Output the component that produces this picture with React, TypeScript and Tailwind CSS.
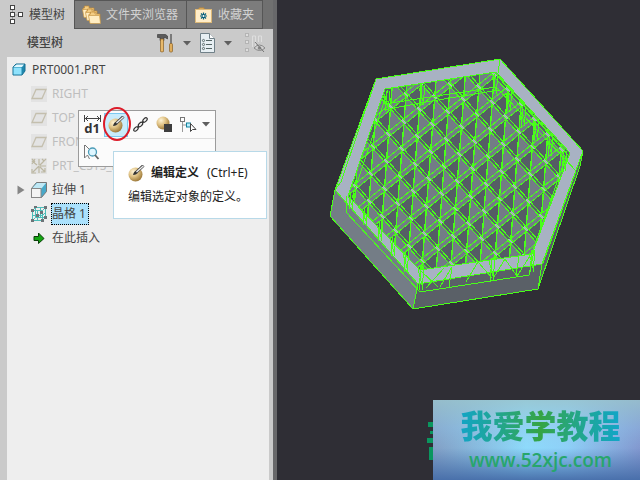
import type { ReactNode } from "react";

const GREEN = "#48ff18";

function TreeTabIcon() {
  return (
    <svg width="15" height="20" viewBox="0 0 15 20" className="shrink-0">
      <path d="M4.500 3v14M4.500 10h6" stroke="#999" fill="none" />
      <g fill="#fff" stroke="#444">
        <rect x="2.500" y="0.500" width="4" height="4" />
        <rect x="2.500" y="7.500" width="4" height="4" />
        <rect x="10.500" y="7.500" width="4" height="4" />
        <rect x="2.500" y="14.500" width="4" height="4" />
      </g>
    </svg>
  );
}

function FoldersIcon() {
  return (
    <svg width="20" height="20" viewBox="0 0 20 20" className="shrink-0">
      {[0, 3, 6].map((n) => (
        <g key={n} transform={`translate(${n} ${n})`}>
          <path d="M1 3h1.500V1H7v2h5v8H2z" fill="#f3cd83" stroke="#c08a36" strokeWidth="0.700" />
          <path d="M0.500 4.500h11l1 8H2z" fill="#ffedc2" stroke="#c99a4b" strokeWidth="0.700" />
        </g>
      ))}
    </svg>
  );
}

function FavoritesIcon() {
  return (
    <svg width="18" height="18" viewBox="0 0 18 18" className="shrink-0">
      <path d="M4 4V2h5v2" fill="#e9bd72" stroke="#c08a36" />
      <rect x="0.500" y="3.500" width="16" height="13" fill="#ffedc9" stroke="#dcb878" />
      <path d="M8.500 6.500v7M5 10h7M6 7.500l5 5M11 7.500l-5 5" stroke="#08607c" strokeWidth="1.200" />
      <circle cx="8.500" cy="10" r="1" fill="#fff" />
    </svg>
  );
}

function ToolsIcon() {
  return (
    <svg width="18" height="20" viewBox="0 0 18 20">
      <path d="M0.500 1.500h8l2 1.500v3L8 4.500H7v3H3V4.500H0.500z" fill="#5b5b5b" stroke="#333" strokeWidth="0.600" />
      <path d="M3.500 6h3v12.500q-1.500 1-3 0z" fill="#e8b96b" stroke="#8a6025" strokeWidth="0.700" />
      <path d="M14 1v10" stroke="#666" strokeWidth="1.600" />
      <rect x="12.500" y="10.500" width="3" height="8.500" rx="1" fill="#e0ad5b" stroke="#8a6025" strokeWidth="0.700" />
    </svg>
  );
}

function ListIcon() {
  return (
    <svg width="17" height="20" viewBox="0 0 17 20">
      <path d="M1.500 0.500h9l5 5v14h-14z" fill="#e7eff3" stroke="#708088" />
      <path d="M10.500 0.500v5h5" fill="#fff" stroke="#708088" />
      <path d="M7 7.500h6M7 11.500h6M7 15.500h6" stroke="#566" />
      <g fill="none" stroke="#455" strokeWidth="0.800">
        <circle cx="4.500" cy="7.500" r="1.100" />
        <circle cx="4.500" cy="11.500" r="1.100" />
        <circle cx="4.500" cy="15.500" r="1.100" />
      </g>
    </svg>
  );
}

function HiddenColumnsIcon() {
  return (
    <svg width="22" height="20" viewBox="0 0 22 20">
      <g fill="#dedede" stroke="#b4b4b4">
        <rect x="1.500" y="0.500" width="3" height="3" />
        <rect x="1.500" y="7.500" width="3" height="3" />
        <rect x="1.500" y="15.500" width="3" height="3" />
        <path d="M8.500 14V3h3v10M14.500 9V3h3v6" fill="none" stroke="#dedede" />
      </g>
      <path d="M10 15q5.500-6 11 0-5.500 5-11 0z" fill="#d2d2d2" stroke="#888" />
      <circle cx="15.500" cy="15" r="1.800" fill="#888" />
      <path d="M11 9l9 10" stroke="#777" />
    </svg>
  );
}

function Caret() {
  return (
    <svg width="8" height="5" viewBox="0 0 8 5">
      <path d="M0 0h8L4 4.500z" fill="#5f5f5f" />
    </svg>
  );
}

function PartIcon() {
  return (
    <svg width="14" height="13" viewBox="0 0 14 13">
      <path d="M1 4l3-3h9v7l-3 4H1z" fill="#1f87ad" stroke="#176f92" />
      <path d="M1.500 4l3-2.500H12L10 4z" fill="#e1f8ff" />
      <path d="M1.500 4.500h8V11.500h-8z" fill="#8fe2fc" />
    </svg>
  );
}

function PlaneIcon() {
  return (
    <svg width="16" height="16" viewBox="0 0 16 16">
      <rect width="16" height="16" fill="#e3e3e3" />
      <path d="M5 3.500h10l-4 9H1z" fill="none" stroke="#c4bfae" strokeWidth="1.300" />
    </svg>
  );
}

function CsysIcon() {
  return (
    <svg width="16" height="16" viewBox="0 0 16 16">
      <rect width="16" height="16" fill="#e3e3e3" />
      <path d="M1 3l5 4M1 1l3 3M4 1L1 6M8 7V1M8 8h7M8 8l-6 6M8 9v6M9 9l5 5M14 10v4h-4M9 7l4-4M11 1l2 2 2-2M1 11v4h4" fill="none" stroke="#bcb7a2" strokeWidth="1.200" />
    </svg>
  );
}

function ExtrudeIcon() {
  return (
    <svg width="16" height="16" viewBox="0 0 16 16">
      <path d="M0.500 6.500l5-6h10v9l-5 6z" fill="#48a9c9" stroke="#777" />
      <path d="M1 6.500l5-5.500h9l-4.500 5.500z" fill="#bfe8f5" />
      <rect x="0.500" y="6.500" width="9.500" height="9" fill="#f4f4f4" stroke="#888" />
    </svg>
  );
}

function LatticeIcon() {
  return (
    <svg width="16" height="16" viewBox="0 0 16 16">
      <path d="M1.500 4.500h10v10h-10zM4.500 1.500h10v10h-10zM1.500 4.500l3-3M11.500 4.500l3-3M11.500 14.500l3-3M1.500 14.500l3-3M6.500 4.500v10M9.500 1.500v10M1.500 9.500h10l3-3" fill="none" stroke="#4dbdb9" />
      <path d="M0 3h3v3H0zM13 0h3v3h-3zM3 0h3v2H3zM0 13h3v3H0zM10 13h3v3h-3zM5 8h3v3H5zM9 5h3v3H9zM13 10h3v3h-3z" fill="#6c7478" />
    </svg>
  );
}

function InsertIcon() {
  return (
    <svg width="12" height="12" viewBox="0 0 12 12">
      <path d="M1 4.500h4.500V1L11 6.500 5.500 11.500V8.500H1z" fill="#13a512" stroke="#073f06" />
    </svg>
  );
}

function SphereDefs() {
  return (
    <svg width="0" height="0" className="absolute">
      <defs>
        <radialGradient id="sphere" cx="0.350" cy="0.300" r="0.800">
          <stop offset="0" stopColor="#fff4d6" />
          <stop offset="0.450" stopColor="#dfc183" />
          <stop offset="1" stopColor="#8f6a2a" />
        </radialGradient>
      </defs>
    </svg>
  );
}

function EditDefinitionIcon() {
  return (
    <svg width="17" height="17" viewBox="0 0 17 17">
      <circle cx="7.500" cy="9.500" r="7" fill="url(#sphere)" />
      <path d="M5 10q1-4 3-4l2 1q-1 3-5 3z" fill="#333" />
      <path d="M8 7.500L15.500 0.500" stroke="#444" strokeWidth="3" />
      <path d="M8.500 7L15.500 0.800" stroke="#eee" strokeWidth="1.300" />
    </svg>
  );
}

function DimensionIcon() {
  return (
    <span className="flex flex-col items-center">
      <svg width="17" height="7" viewBox="0 0 17 7">
        <path d="M0.500 0v7M16.500 0v7M1 3.500h15M4 1L1.500 3.500 4 6M13 1l2.500 2.500L13 6" fill="none" stroke="#444" />
      </svg>
      <span className="text-[13px] leading-3 font-bold text-[#333]">d1</span>
    </span>
  );
}

function ChainIcon() {
  return (
    <svg width="15" height="15" viewBox="0 0 15 15">
      <g fill="#f5f5f5" stroke="#333" strokeWidth="1.200">
        <ellipse cx="3" cy="12" rx="2.700" ry="1.500" transform="rotate(-45 3 12)" />
        <ellipse cx="7.500" cy="7.500" rx="2.700" ry="1.500" transform="rotate(-45 7.500 7.500)" />
        <ellipse cx="12" cy="3" rx="2.700" ry="1.500" transform="rotate(-45 12 3)" />
      </g>
      <path d="M4.500 10.500l1.500-1.500M9 6l1.500-1.500" stroke="#333" strokeWidth="1.500" />
    </svg>
  );
}

function AppearanceIcon() {
  return (
    <svg width="17" height="17" viewBox="0 0 17 17">
      <circle cx="7" cy="7" r="6.500" fill="url(#sphere)" />
      <rect x="8" y="8" width="8" height="8" fill="#3e3e3e" />
    </svg>
  );
}

function SelectParentIcon() {
  return (
    <svg width="17" height="16" viewBox="0 0 17 16">
      <path d="M2.500 5v10M2.500 8h5" stroke="#999" />
      <rect x="0.500" y="0.500" width="4" height="4" fill="#fff" stroke="#777" />
      <rect x="6.500" y="6" width="4" height="4" fill="#baf0ff" stroke="#14819c" />
      <path d="M10.500 6.500v8l2-2 3.500 0z" fill="#fff" stroke="#444" />
    </svg>
  );
}

function SearchCursorIcon() {
  return (
    <svg width="17" height="17" viewBox="0 0 17 17">
      <path d="M1.500 1v13l3-3 2 4" fill="none" stroke="#777" />
      <path d="M2 1l5 5" stroke="#777" />
      <circle cx="9.500" cy="8" r="4" fill="#dff6ff" stroke="#4c9cb8" strokeWidth="1.300" />
      <path d="M12 11l3.500 4" stroke="#666" strokeWidth="1.800" />
    </svg>
  );
}

interface TreeItem {
  label: string;
  icon: ReactNode;
  faded?: boolean;
  expandable?: boolean;
  selected?: boolean;
}

const TREE: TreeItem[] = [
  { label: "RIGHT", icon: <PlaneIcon />, faded: true },
  { label: "TOP", icon: <PlaneIcon />, faded: true },
  { label: "FRONT", icon: <PlaneIcon />, faded: true },
  { label: "PRT_CSYS_DEF", icon: <CsysIcon />, faded: true },
  { label: "拉伸 1", icon: <ExtrudeIcon />, expandable: true },
  { label: "晶格 1", icon: <LatticeIcon />, selected: true },
  { label: "在此插入", icon: <InsertIcon /> },
];

function TreeRow({ item }: { item: TreeItem }) {
  return (
    <li className="flex h-6 items-center pl-2">
      <span className="flex w-4 items-center">
        {item.expandable && (
          <button aria-label="展开" className="pl-0.5">
            <svg width="8" height="10" viewBox="0 0 8 10" className="block">
              <path d="M0.500 0.500L7.500 5 0.500 9.500z" fill="#858585" />
            </svg>
          </button>
        )}
      </span>
      <span className="flex w-4 justify-center">{item.icon}</span>
      <span
        className={`ml-1 border pr-0.5 leading-5 ${
          item.selected ? "border-dotted border-black bg-[#abe1fc]" : "border-transparent"
        } ${item.faded ? "text-[#bebebe]" : "text-[#444]"}`}
      >
        {item.label}
      </span>
    </li>
  );
}

function ContextToolbar() {
  return (
    <div className="absolute top-[110px] left-[78px] w-[138px] border border-[#9b9b9b] bg-[#fbfbfb]">
      <div className="flex h-7 items-center border-b border-[#ddd] pl-px">
        <button aria-label="编辑尺寸" className="flex h-6 w-6 items-center justify-center">
          <DimensionIcon />
        </button>
        <button aria-label="编辑定义" className="flex h-6 w-6 items-center justify-center border border-[#7ccaf0] bg-[#c9ecfb]">
          <EditDefinitionIcon />
        </button>
        <button aria-label="编辑参考" className="flex h-6 w-6 items-center justify-center">
          <ChainIcon />
        </button>
        <button aria-label="外观" className="flex h-6 w-6 items-center justify-center">
          <AppearanceIcon />
        </button>
        <button aria-label="选择父项" className="flex h-6 w-6 items-center justify-center">
          <SelectParentIcon />
        </button>
        <button aria-label="更多" className="flex h-6 w-3 items-center justify-center">
          <Caret />
        </button>
      </div>
      <button aria-label="查找" className="flex h-[27px] w-[25px] items-center justify-center">
        <SearchCursorIcon />
      </button>
      <div className="absolute -top-1 left-[24px] h-[34px] w-7 rounded-[50%] border-2 border-[#dc1c2a]" />
    </div>
  );
}

function Tooltip() {
  return (
    <div role="tooltip" className="absolute top-[151px] left-[113px] h-[68px] w-[154px] border border-[#b8d9e8] bg-white pt-[9px] pl-[14px] text-[#222]">
      <div className="flex h-6 items-center gap-[6px] whitespace-nowrap">
        <EditDefinitionIcon />
        <span className="flex gap-2">
          <b>编辑定义</b>
          <span>(Ctrl+E)</span>
        </span>
      </div>
      <p className="leading-6 whitespace-nowrap">编辑选定对象的定义。</p>
    </div>
  );
}

const range = (from: number, to: number) => Array.from({ length: to - from + 1 }, (_, i) => from + i);

// lattice node at grid position (i, j)
function node(i: number, j: number) {
  return [432.7 + 13.35 * i - 15.4 * j, 124.3 + 14.93 * i + 12.4 * j];
}

const HOLE = "385,89 496,72 570,153 532,254 420,270 348,196";

function LatticeCells() {
  const cells = range(-14, 18).flatMap((i) =>
    range(-14, 14).map((j) => ({ key: `${i},${j}`, p: node(i, j), a: node(i + 1, j), b: node(i, j + 1), c: node(i + 1, j + 1) }))
  );
  return (
    <g fill="none">
      {cells.map(({ key, p, a, c }) => (
        <path key={key} d={`M${p}L${a} ${c}z`} fill="#737c86" />
      ))}
      {cells.map(({ key, p, b }) => (
        <path key={key} d={`M${p}L${b}`} stroke="#737c86" strokeWidth="5" />
      ))}
      {cells.map(({ key, p, a }) => (
        <path key={key} d={`M${p}L${a}`} stroke="#5b636b" strokeWidth="3" />
      ))}
      {cells.map(({ key, p: [px, py], a: [ax, ay], b: [bx, by], c: [cx, cy] }) => (
        <g key={key} stroke={GREEN}>
          <path d={`M${px + 1} ${py - 1}L${ax + 1} ${ay - 1}M${px - 1} ${py + 1}L${ax - 1} ${ay + 1}`} />
          <path d={`M${px - 1} ${py - 2}L${bx - 1} ${by - 2}M${px + 1} ${py + 2}L${bx + 1} ${by + 2}`} />
          <path d={`M${px} ${py}L${cx} ${cy}`} strokeWidth="1.400" />
        </g>
      ))}
      {cells.map(({ key, p: [x, y] }) => (
        <path key={key} d={`M${x - 2} ${y - 2}l4 4`} stroke="#a4b4b8" strokeWidth="2" />
      ))}
    </g>
  );
}

function Strut({ x, y, h }: { x: number; y: number; h: number }) {
  return <path d={`M${x} ${y}l-2 ${h}M${x + 3} ${y}l-2 ${h}M${x - 3} ${y + 3}l5 ${h - 4}`} stroke={GREEN} fill="none" />;
}

function HexModel() {
  return (
    <svg width="260" height="260" viewBox="327 54 260 260" shapeRendering="crispEdges" aria-label="晶格模型">
      <defs>
        <clipPath id="hole">
          <polygon points={HOLE} />
        </clipPath>
      </defs>
      <polygon points="376,79 335,190 330,216 413,309 538,289 580,166 583,151" fill="#5a6067" />
      <polygon points="335,190 330,216 413,309 418,284" fill="#747d86" />
      <polygon points="376,79 500,59 583,151 542,264 418,284 335,190" fill="#a8b2c3" />
      <polygon points={HOLE} fill="#555d65" />
      <g clipPath="url(#hole)">
        <LatticeCells />
        <path d="M384 104l112-17 70 73M384 110l36-7 79-13M497 75l68 75" stroke={GREEN} fill="none" />
        <path d="M388 90l-36 108M566 157l-34 96" stroke={GREEN} fill="none" />
      </g>
      <g fill="none" stroke={GREEN}>
        <polygon points="376,79 500,59 583,151 542,264 418,284 335,190" />
        <path d="M335 190l-5 26 83 93 125-20 42-123 3-15M418 284l-5 25M542 264l-4 25M500 59l-2 14" />
        <polygon points={HOLE} />
        <path d="M376 79L341 182l-6 8M347 196l-1 16 74 80 109-17 5-24M566 160l10 11-33 92" />
      </g>
      <Strut x={351} y={192} h={17} />
      <Strut x={365} y={207} h={18} />
      <Strut x={380} y={222} h={19} />
      <Strut x={393} y={237} h={19} />
      <Strut x={406} y={251} h={21} />
      <Strut x={421} y={266} h={24} />
      <Strut x={492} y={258} h={22} />
      <Strut x={532} y={250} h={22} />
      <Strut x={387} y={91} h={20} />
      <Strut x={422} y={85} h={20} />
      <Strut x={495} y={74} h={20} />
      <Strut x={509} y={91} h={20} />
      <Strut x={523} y={106} h={20} />
      <Strut x={536} y={121} h={20} />
      <Strut x={550} y={136} h={20} />
      <Strut x={564} y={151} h={20} />
      <path d="M420 270l18 17M426 288l18-20M452 267l-3 20M452 267l-12 20M478 262l-12 20M478 262l14 16M505 259l12 17M505 259l-11 18M519 256l-3 20M530 256l-13 20" stroke={GREEN} />
    </svg>
  );
}

function Watermark() {
  return (
    <div className="absolute right-0 bottom-0 flex h-20 w-[207px] flex-col items-center bg-[#7eaadb] bg-[linear-gradient(180deg,#9ac4cccc_0%,#96c9e955_35%,#8bc4f200_60%,#456ca8ee_100%),linear-gradient(90deg,#829fc5_0%,#8edafb_45%,#8ed0f8_65%,#8298cf_100%)] pl-2">
      <span className="bg-linear-to-r from-[#14a4c6] via-[#35a443] to-[#12a5ca] bg-clip-text pt-[6px] font-['Noto_Sans_CJK_SC',sans-serif] text-[32px] leading-9 font-black whitespace-nowrap text-transparent">
        我爱学教程
      </span>
      <a href="#" className="font-['Open_Sans','Noto_Sans',sans-serif] text-[19px] leading-9 font-semibold text-[#27a66c]">
        www.52xjc.com
      </a>
    </div>
  );
}

export default function App() {
  return (
    <div className="relative flex min-h-screen bg-[#2f2e35] font-['Noto_Sans','Noto_Sans_CJK_SC',sans-serif] text-xs text-[#444]">
      <SphereDefs />
      <aside className="flex w-[277px] shrink-0 flex-col border-r-4 border-[#68686a] bg-[#cacaca]">
        <div role="tablist" className="flex h-[29px] bg-[#707070] whitespace-nowrap">
          <button role="tab" aria-selected="true" className="flex w-[74px] items-center gap-[6px] bg-[#cacaca] pl-2">
            <TreeTabIcon />
            模型树
          </button>
          <button role="tab" aria-selected="false" className="flex w-[113px] items-center gap-1 border border-[#565656] bg-[#7c7c7c] pl-[7px] text-[#d2d2d2]">
            <FoldersIcon />
            文件夹浏览器
          </button>
          <button role="tab" aria-selected="false" className="flex w-[76px] items-center gap-[5px] border-y border-r border-[#565656] bg-[#7c7c7c] pl-2 text-[#d2d2d2]">
            <FavoritesIcon />
            收藏夹
          </button>
        </div>
        <div className="flex h-7 items-center justify-between pr-[7px] pl-[27px]">
          <h2 className="font-medium">模型树</h2>
          <div className="flex items-center gap-2">
            <button aria-label="设置" className="flex items-center gap-2">
              <ToolsIcon />
              <Caret />
            </button>
            <button aria-label="显示" className="flex items-center gap-2">
              <ListIcon />
              <Caret />
            </button>
            <button aria-label="隐藏列" className="ml-1">
              <HiddenColumnsIcon />
            </button>
          </div>
        </div>
        <div className="mr-1 ml-[7px] flex-1 bg-[#eee]">
          <div className="flex h-[25px] items-center gap-[6px] pl-[5px]">
            <PartIcon />
            PRT0001.PRT
          </div>
          <ul>
            {TREE.map((item) => (
              <TreeRow key={item.label} item={item} />
            ))}
          </ul>
        </div>
      </aside>
      <main className="relative min-w-0 flex-1 overflow-hidden pt-[54px] pl-[50px]">
        <HexModel />
        <svg width="6" height="40" viewBox="0 0 6 40" className="absolute right-[207px] bottom-5">
          <path d="M1 2h5v5H1zM0 18h6v5H0zM2 27h4v13H2zM3 11h3v3H3z" fill="#0a965f" />
        </svg>
        <Watermark />
      </main>
      <ContextToolbar />
      <Tooltip />
    </div>
  );
}
